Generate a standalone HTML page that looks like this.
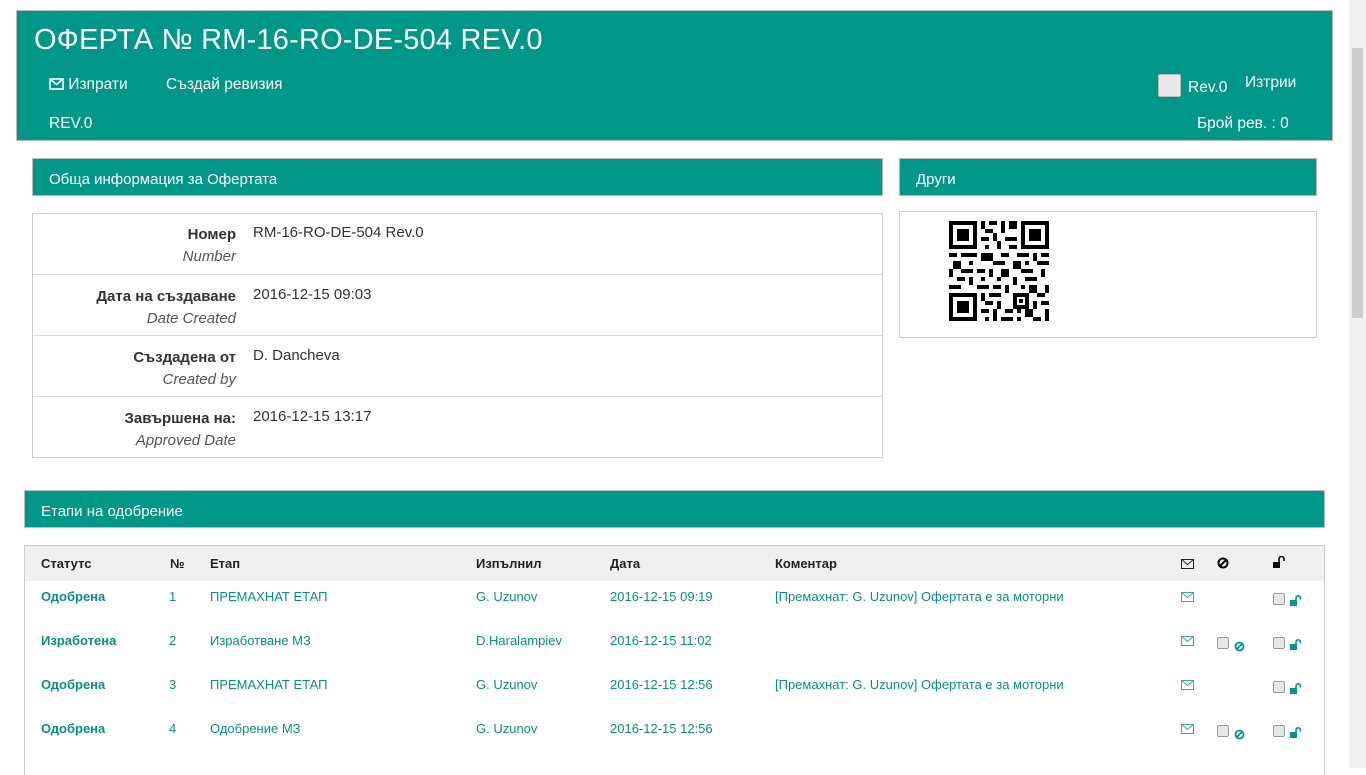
<!DOCTYPE html>
<html><head><meta charset="utf-8"><style>
*{box-sizing:border-box;margin:0;padding:0}
body{width:1366px;height:768px;overflow:hidden;background:#fff;font-family:"Liberation Sans","DejaVu Sans",sans-serif;color:#333;position:relative}
.abs{position:absolute}
.teal{background:#009688;color:#fff}
.hdr{left:16px;top:10px;width:1317px;height:131px;border:1px solid #bbb}
.hdr .t{left:17px;top:13px;font-size:29px;letter-spacing:0.2px}
.hdr .s{font-size:15.5px}
.ph{height:38px;font-size:15px;padding:12px 16px;color:#fff;background:#009688;border:1px solid #bbb}
.box{border:1px solid #ccc}
.row{position:absolute;left:0;width:849px;height:61px;border-top:1px solid #ddd}
.row .l{position:absolute;right:646px;top:11px;text-align:right;font-size:15px;line-height:22px}
.row .l b{color:#333}
.row .l i{color:#555}
.row .v{position:absolute;left:220px;top:11px;font-size:15px}
.th{font-size:13px;font-weight:bold;color:#222}
.td{font-size:13px;color:#0a8f80}
.cb{position:absolute;width:12px;height:12px;border:1px solid #999;border-radius:2px;background:#e6e6e6}
</style></head><body>
<div class="abs" style="right:0;top:0;width:17px;height:768px;background:#f1f1f1"></div>
<div class="abs" style="right:3px;top:48px;width:11px;height:270px;background:#cdcdcd"></div>

<div class="abs teal hdr">
 <div class="abs t">ОФЕРТА № RM-16-RO-DE-504 REV.0</div>
 <div class="abs s" style="left:32px;top:65px"><svg width="15" height="12" viewBox="0 0 15 12" style="vertical-align:-1px"><rect x="1" y="1" width="13" height="10" fill="none" stroke="#fff" stroke-width="1.6"/><path d="M1 1l6.5 5.5L14 1" fill="none" stroke="#fff" stroke-width="1.6"/></svg> Изпрати</div>
 <div class="abs s" style="left:149px;top:65px">Създай ревизия</div>
 <div class="abs s" style="left:32px;top:104px">REV.0</div>
 <div class="abs" style="left:1141px;top:63px;width:23px;height:23px;background:#e8e8e8;border:1px solid #bbb;border-radius:2px"></div>
 <div class="abs s" style="left:1171px;top:68px">Rev.0</div>
 <div class="abs s" style="left:1228px;top:63px">Изтрии</div>
 <div class="abs s" style="left:1180px;top:104px">Брой рев. : 0</div>
</div>

<div class="abs ph" style="left:32px;top:158px;width:851px">Обща информация за Офертата</div>
<div class="abs box" style="left:32px;top:213px;width:851px;height:245px">
 <div class="row" style="top:-1px;border-top:none"><div class="l"><b>Номер</b><br><i>Number</i></div><div class="v">RM-16-RO-DE-504 Rev.0</div></div>
 <div class="row" style="top:60px"><div class="l"><b>Дата на създаване</b><br><i>Date Created</i></div><div class="v">2016-12-15 09:03</div></div>
 <div class="row" style="top:121px"><div class="l"><b>Създадена от</b><br><i>Created by</i></div><div class="v">D. Dancheva</div></div>
 <div class="row" style="top:182px"><div class="l"><b>Завършена на:</b><br><i>Approved Date</i></div><div class="v">2016-12-15 13:17</div></div>
</div>

<div class="abs ph" style="left:899px;top:158px;width:418px">Други</div>
<div class="abs box" style="left:899px;top:211px;width:418px;height:127px">
<svg class="abs" style="left:49px;top:9px" width="100" height="100" viewBox="0 0 25 25" shape-rendering="crispEdges">
<g fill="#000">
<path d="M0 0h7v7h-7zM18 0h7v7h-7zM0 18h7v7h-7z"/>
</g><g fill="#fff"><path d="M1 1h5v5h-5zM19 1h5v5h-5zM1 19h5v5h-5z"/></g>
<g fill="#000"><path d="M2 2h3v3h-3zM20 2h3v3h-3zM2 20h3v3h-3z"/>
<path d="M8 0h1v2h-1zM10 0h2v1h-2zM13 0h1v3h-1zM15 0h2v2h-2zM9 2h2v1h-2zM11 3h1v2h-1zM8 4h2v1h-2zM14 4h3v1h-3zM9 6h1v1h-1zM12 5h1v2h-1zM15 6h2v1h-2z
M0 8h2v1h-2zM3 8h4v1h-4zM8 8h3v2h-3zM13 8h2v1h-2zM17 8h3v1h-3zM21 8h1v2h-1zM23 8h2v1h-2z
M1 10h2v2h-2zM5 10h1v1h-1zM11 10h3v1h-3zM16 10h2v2h-2zM19 10h1v1h-1zM22 10h3v1h-3z
M0 12h1v2h-1zM3 12h3v1h-3zM7 12h2v1h-2zM10 12h1v2h-1zM13 12h2v2h-2zM18 12h3v1h-3zM23 12h1v2h-1z
M2 14h2v1h-2zM5 14h1v2h-1zM8 14h1v1h-1zM12 14h1v1h-1zM16 14h1v2h-1zM19 14h3v1h-3z
M0 16h3v1h-3zM7 16h3v1h-3zM11 16h2v1h-2zM14 16h1v2h-1zM18 16h1v1h-1zM20 16h2v2h-2zM24 16h1v2h-1z
M8 18h1v2h-1zM10 18h3v1h-3zM16 18h4v4h-4zM22 18h2v1h-2z
M9 20h2v1h-2zM12 20h1v2h-1zM21 20h1v2h-1zM23 20h2v1h-2z
M8 22h2v1h-2zM11 22h1v3h-1zM14 22h2v1h-2zM17 22h1v1h-1zM19 22h2v2h-2zM24 22h1v3h-1z
M9 24h1v1h-1zM13 24h3v1h-3zM17 24h1v1h-1zM21 24h2v1h-2z"/></g>
<path fill="#fff" d="M17 19h2v2h-2z"/><path d="M17.5 19.5h1v1h-1z"/>
</svg>
</div>

<div class="abs ph" style="left:24px;top:490px;width:1301px">Етапи на одобрение</div>
<div class="abs" style="left:24px;top:545px;width:1301px;height:230px;border:1px solid #ccc;border-bottom:none">
 <div class="abs" style="left:0;top:0;width:1299px;height:35px;background:#f0f0f0"></div>
 <div class="abs th" style="left:16px;top:10px">Статутс</div>
 <div class="abs th" style="left:145px;top:10px">№</div>
 <div class="abs th" style="left:185px;top:10px">Етап</div>
 <div class="abs th" style="left:451px;top:10px">Изпълнил</div>
 <div class="abs th" style="left:585px;top:10px">Дата</div>
 <div class="abs th" style="left:750px;top:10px">Коментар</div>
 <svg class="abs" style="left:1156px;top:13px" width="13" height="10"><rect x=".5" y=".5" width="12" height="9" fill="none" stroke="#222"/><path d="M.5 .5l6 5 6-5" fill="none" stroke="#222"/></svg>
 <svg class="abs" style="left:1192px;top:11px" width="12" height="12"><circle cx="6" cy="6" r="4.5" fill="none" stroke="#000" stroke-width="2"/><path d="M3 9L9 3" stroke="#000" stroke-width="2"/></svg>
 <svg class="abs" style="left:1248px;top:10px" width="13" height="12"><rect x="0" y="6" width="7" height="6" fill="#000"/><path d="M6 6V3a2.5 2.5 0 0 1 5 0v2" fill="none" stroke="#000" stroke-width="1.6"/></svg>
</div>
<div id="rows"></div>
<script>
var d=[["Одобрена","1","ПРЕМАХНАТ ЕТАП","G. Uzunov","2016-12-15 09:19","[Премахнат: G. Uzunov] Офертата е за моторни",0],
["Изработена","2","Изработване МЗ","D.Haralampiev","2016-12-15 11:02","",1],
["Одобрена","3","ПРЕМАХНАТ ЕТАП","G. Uzunov","2016-12-15 12:56","[Премахнат: G. Uzunov] Офертата е за моторни",0],
["Одобрена","4","Одобрение МЗ","G. Uzunov","2016-12-15 12:56","",1]];
var h="";
d.forEach(function(r,i){var y=589+i*44;
h+='<div class="abs td" style="left:41px;top:'+y+'px;font-weight:bold">'+r[0]+'</div>';
h+='<div class="abs td" style="left:169px;top:'+y+'px">'+r[1]+'</div>';
h+='<div class="abs td" style="left:210px;top:'+y+'px">'+r[2]+'</div>';
h+='<div class="abs td" style="left:476px;top:'+y+'px">'+r[3]+'</div>';
h+='<div class="abs td" style="left:610px;top:'+y+'px">'+r[4]+'</div>';
h+='<div class="abs td" style="left:775px;top:'+y+'px">'+r[5]+'</div>';
h+='<svg class="abs" style="left:1181px;top:'+(y+3)+'px" width="13" height="10"><rect x=".5" y=".5" width="12" height="9" fill="none" stroke="#3aa89c"/><path d="M.5 .5l6 5 6-5" fill="none" stroke="#3aa89c"/></svg>';
if(r[6]){h+='<div class="cb" style="left:1217px;top:'+(y+4)+'px"></div>';
h+='<svg class="abs" style="left:1234px;top:'+(y+8)+'px" width="11" height="11"><circle cx="5.5" cy="5.5" r="4" fill="none" stroke="#009688" stroke-width="1.8"/><path d="M2.5 8.5L8.5 2.5" stroke="#009688" stroke-width="1.8"/></svg>';}
h+='<div class="cb" style="left:1273px;top:'+(y+4)+'px"></div>';
h+='<svg class="abs" style="left:1290px;top:'+(y+6)+'px" width="12" height="11"><rect x="0" y="5" width="7" height="6" fill="#009688"/><path d="M6 5V3a2.2 2.2 0 0 1 4.4 0v1.5" fill="none" stroke="#009688" stroke-width="1.6"/></svg>';
});
document.getElementById("rows").innerHTML=h;
</script>
</body></html>
